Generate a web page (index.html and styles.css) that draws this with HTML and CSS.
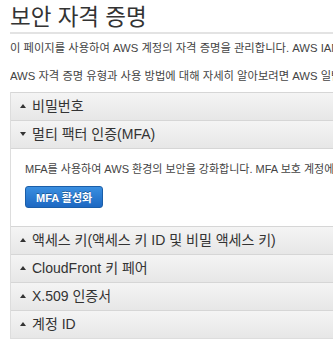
FILE: index.html
```html
<html>
	<head>
		<meta charset="utf-8">
		<link rel="stylesheet" href="styles.css">
	</head>
	<body>
		<h1 class='title'>보안 자격 증명</h1>
		<p class='intro'>이 페이지를 사용하여 AWS 계정의 자격 증명을 관리합니다. AWS IAM</p>
		<p class='intro'>AWS 자격 증명 유형과 사용 방법에 대해 자세히 알아보려면 AWS 일반</p>

		<div class='panel'>
			<div class='section'>
				<div class='head'><span class='caret up'></span>비밀번호</div>
			</div>
			<div class='section open'>
				<div class='head'><span class='caret down'></span>멀티 팩터 인증(MFA)</div>
				<div class='body'>
					<p>MFA를 사용하여 AWS 환경의 보안을 강화합니다. MFA 보호 계정에</p>
					<button class='btn'>MFA 활성화</button>
				</div>
			</div>
			<div class='section'>
				<div class='head'><span class='caret up'></span>액세스 키(액세스 키 ID 및 비밀 액세스 키)</div>
			</div>
			<div class='section'>
				<div class='head'><span class='caret up'></span>CloudFront 키 페어</div>
			</div>
			<div class='section'>
				<div class='head'><span class='caret up'></span>X.509 인증서</div>
			</div>
			<div class='section'>
				<div class='head'><span class='caret up'></span>계정 ID</div>
			</div>
		</div>
	</body>
</html>
```

FILE: styles.css
```css
html body {
	margin: 0;
	padding: 0 0 0 10px;
	background-color: #fff;
	font-family: "Liberation Sans", "Noto Sans CJK KR", sans-serif;
	color: #444;
	overflow: hidden;
	white-space: nowrap;
}

.title {
	margin: 0;
	padding-top: 3px;
	height: 29px;
	font-size: 22.5px;
	line-height: 29px;
	font-weight: normal;
	color: #333;
	border-bottom: 2px solid #e3e3e3;
}

.intro {
	margin: 6px 0 0 0;
	font-size: 11.3px;
	line-height: 16px;
	color: #444;
	overflow: hidden;
}

.intro + .intro {
	margin-top: 12px;
}

.panel {
	margin-top: 8px;
	margin-right: -40px;
	border-left: 1px solid #ddd;
	border-bottom: 1px solid #ddd;
}

.head {
	height: 27px;
	line-height: 26px;
	padding-left: 9px;
	font-size: 14px;
	color: #333;
	border-top: 1px solid #d6d6d6;
	background: linear-gradient(#f4f4f4, #e7e7e7);
}

.caret {
	display: inline-block;
	width: 0;
	height: 0;
	margin-right: 6px;
	vertical-align: middle;
	border-left: 3.5px solid transparent;
	border-right: 3.5px solid transparent;
}

.caret.up {
	border-bottom: 4px solid #333;
	margin-top: -3px;
}

.caret.down {
	border-top: 4px solid #333;
	margin-top: -2px;
}

.body {
	height: 77px;
	padding: 0 0 0 14px;
	border-top: 1px solid #d6d6d6;
	background-color: #fff;
	overflow: hidden;
}

.body p {
	margin: 13px 0 0 0;
	font-size: 11px;
	line-height: 14px;
	color: #444;
}

.btn {
	margin-top: 10px;
	height: 22px;
	padding: 0 10px;
	font-family: "Liberation Sans", "Noto Sans CJK KR", sans-serif;
	font-size: 11px;
	font-weight: bold;
	color: #fff;
	text-shadow: 0 -1px 0 rgba(0, 0, 0, 0.3);
	border: 1px solid #1b5ea8;
	border-radius: 3px;
	background: linear-gradient(#3a8fe0, #1d68c2);
}
```
